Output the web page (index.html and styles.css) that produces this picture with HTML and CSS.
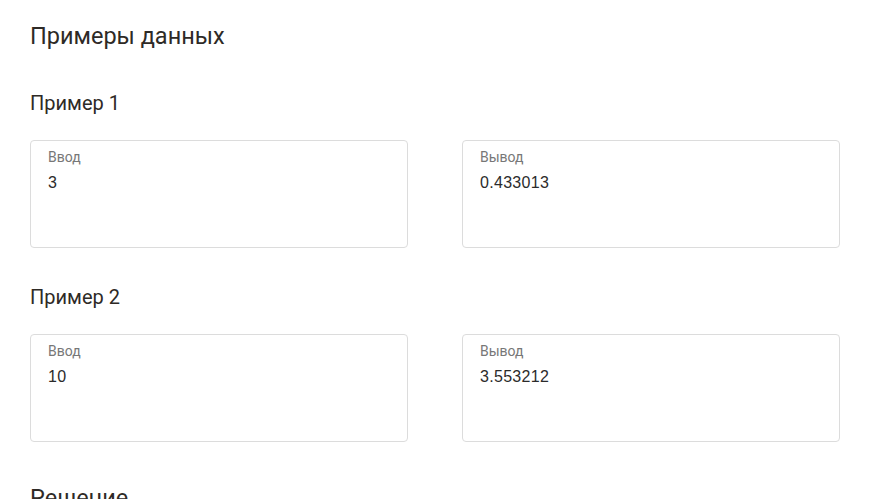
FILE: index.html
```html
<!DOCTYPE html>
<html lang="ru">
<head>
<meta charset="utf-8">
<link rel="stylesheet" href="styles.css">
</head>
<body>
<main class="page">
  <h2 class="section-title">Примеры данных</h2>

  <section class="example">
    <h3 class="example-title">Пример 1</h3>
    <div class="io-grid">
      <div class="io-box">
        <div class="io-label">Ввод</div>
        <div class="io-value">3</div>
      </div>
      <div class="io-box">
        <div class="io-label">Вывод</div>
        <div class="io-value">0.433013</div>
      </div>
    </div>
  </section>

  <section class="example">
    <h3 class="example-title">Пример 2</h3>
    <div class="io-grid">
      <div class="io-box">
        <div class="io-label">Ввод</div>
        <div class="io-value">10</div>
      </div>
      <div class="io-box">
        <div class="io-label">Вывод</div>
        <div class="io-value">3.553212</div>
      </div>
    </div>
  </section>

  <h2 class="section-title next">Решение</h2>
</main>
</body>
</html>
```
FILE: styles.css
```css
html, body {
  margin: 0;
  padding: 0;
  background: #ffffff;
}

.page {
  padding: 20px 30px 0 30px;
  font-family: Roboto, "Liberation Sans", sans-serif;
  color: #2b2b2b;
}

.section-title {
  margin: 0;
  font-size: 23.5px;
  line-height: 32px;
  font-weight: 400;
  color: #2e2a26;
}

.section-title.next {
  margin-top: 40px;
}

.example {
  margin-top: 38px;
}

.example + .example {
  margin-top: 36px;
}

.example-title {
  margin: 0;
  font-size: 20px;
  line-height: 26px;
  font-weight: 400;
  color: #2e2a26;
}

.io-grid {
  margin-top: 24px;
  display: grid;
  grid-template-columns: 378px 378px;
  column-gap: 54px;
}

.io-box {
  box-sizing: border-box;
  height: 108px;
  border: 1px solid #dcdcdc;
  border-radius: 4px;
  padding: 7px 17px;
}

.io-label {
  font-size: 14px;
  line-height: 18px;
  color: #777777;
}

.io-value {
  margin-top: 8px;
  font-family: "Liberation Sans", Arial, sans-serif;
  font-size: 16px;
  line-height: 18px;
  letter-spacing: 0.3px;
  color: #2b2b2b;
}
```
